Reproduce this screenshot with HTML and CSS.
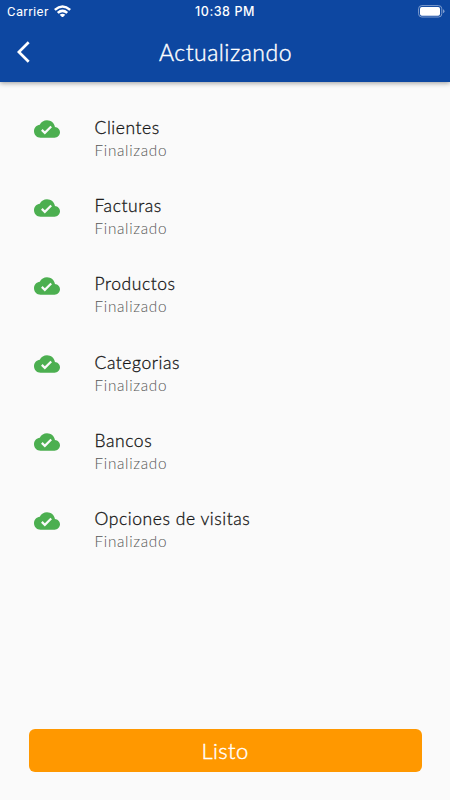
FILE: index.html
```html
<!DOCTYPE html>
<html lang="es">
<head>
<meta charset="utf-8">
<title>Actualizando</title>
<link rel="stylesheet" href="styles.css">
</head>
<body>
<svg class="defs" width="0" height="0"><defs><path id="cloud" d="M19.35 10.04C18.67 6.59 15.64 4 12 4 9.11 4 6.6 5.64 5.35 8.04 2.34 8.36 0 10.91 0 14c0 3.31 2.69 6 6 6h13c2.76 0 5-2.24 5-5 0-2.64-2.05-4.78-4.65-4.96zM10 17l-3.5-3.5 1.41-1.41L10 14.17 15.18 9l1.41 1.41L10 17z"/></defs></svg>
<header class="header">
  <div class="status">
    <div class="carrier"><span class="carrier-name">Carrier</span>
      <svg class="wifi" viewBox="0 0 17 12"><path d="M0 3.9Q8.5-3.5 17 3.9L15.3 5.7Q8.5-.2 1.7 5.7zM2.9 6.9Q8.5 2.2 14.1 6.9L12.4 8.7Q8.5 5.6 4.6 8.7zM5.7 9.8Q8.5 7.7 11.3 9.8L8.5 12.5z"/></svg>
    </div>
    <div class="clock">10:38 PM</div>
    <svg class="battery" viewBox="0 0 27 13"><rect x=".6" y=".6" width="23.2" height="11.4" rx="3.2" fill="none" stroke="#7f9dce"/><rect x="2" y="2" width="20" height="8.8" rx="1.8" fill="#fff"/><path d="M25 4.3q1.5.5 1.5 2t-1.5 2z" fill="#7f9dce"/></svg>
  </div>
  <div class="bar">
    <svg class="back" viewBox="0 0 24 24"><path d="M11.67 3.87L9.9 2.1 0 12l9.9 9.9 1.77-1.77L3.54 12z"/></svg>
    <h1 class="heading"><span class="heading-text">Actualizando</span></h1>
  </div>
</header>
<main class="list">
  <div class="row"><svg class="cloud" viewBox="0 0 24 24"><use href="#cloud"/></svg><div><div class="title">Clientes</div><div class="sub">Finalizado</div></div></div>
  <div class="row"><svg class="cloud" viewBox="0 0 24 24"><use href="#cloud"/></svg><div><div class="title">Facturas</div><div class="sub">Finalizado</div></div></div>
  <div class="row"><svg class="cloud" viewBox="0 0 24 24"><use href="#cloud"/></svg><div><div class="title">Productos</div><div class="sub">Finalizado</div></div></div>
  <div class="row"><svg class="cloud" viewBox="0 0 24 24"><use href="#cloud"/></svg><div><div class="title">Categorias</div><div class="sub">Finalizado</div></div></div>
  <div class="row"><svg class="cloud" viewBox="0 0 24 24"><use href="#cloud"/></svg><div><div class="title">Bancos</div><div class="sub">Finalizado</div></div></div>
  <div class="row"><svg class="cloud" viewBox="0 0 24 24"><use href="#cloud"/></svg><div><div class="title">Opciones de visitas</div><div class="sub">Finalizado</div></div></div>
</main>
<button class="done">Listo</button>
</body>
</html>
```
FILE: styles.css
```css
* { box-sizing: border-box; }
body { margin: 0; height: 800px; display: flex; flex-direction: column; background: #fafafa; font-family: Lato, sans-serif; overflow: hidden; }
.defs { display: none; }
.header { flex: none; height: 82px; background: #0d47a1; color: #fff; box-shadow: 0 1px 5px rgba(0,0,0,.4); }
.status { height: 22px; display: grid; grid-template-columns: 1fr auto 1fr; align-items: center; padding: 0 5px 0 7px; font-family: Inter, sans-serif; font-size: 13px; line-height: 22px; }
.carrier { display: flex; align-items: center; gap: 5px; }
.carrier-name { font-family: Roboto, sans-serif; letter-spacing: .42px; position: relative; top: 1px; }
.wifi { width: 17px; height: 12px; fill: #fff; }
.clock { font-size: 12.5px; font-weight: 500; letter-spacing: .55px; position: relative; top: 1px; left: -1px; }
.battery { width: 27px; height: 13px; justify-self: end; }
.bar { height: 60px; display: grid; grid-template-columns: 60px 1fr 60px; align-items: center; }
.back { width: 26px; height: 26px; margin-left: 17px; fill: #fff; }
.heading { margin: 0; text-align: center; font-size: 23px; font-weight: 300; line-height: 30px; letter-spacing: .5px; -webkit-text-stroke: .4px; position: relative; left: .5px; }
.list { flex: 1; padding-top: 33.9px; }
.row { height: 78.25px; display: grid; grid-template-columns: 60.5px 1fr; padding-left: 34px; }
.cloud { width: 26px; height: 26px; margin-top: .6px; fill: #4caf50; }
.title { font-size: 17.5px; line-height: 23px; letter-spacing: .56px; color: #151515; font-weight: 300; -webkit-text-stroke: .3px; }
.sub { font-size: 15.3px; line-height: 23px; letter-spacing: .7px; color: #555; font-weight: 300; }
.done { flex: none; height: 43px; margin: 0 28.5px 28.5px; border: 0; border-radius: 6px; background: #ff9800; color: #fff; font-family: Lato, sans-serif; font-size: 22px; font-weight: 300; -webkit-text-stroke: .4px; letter-spacing: .4px; padding: 0; }
```
